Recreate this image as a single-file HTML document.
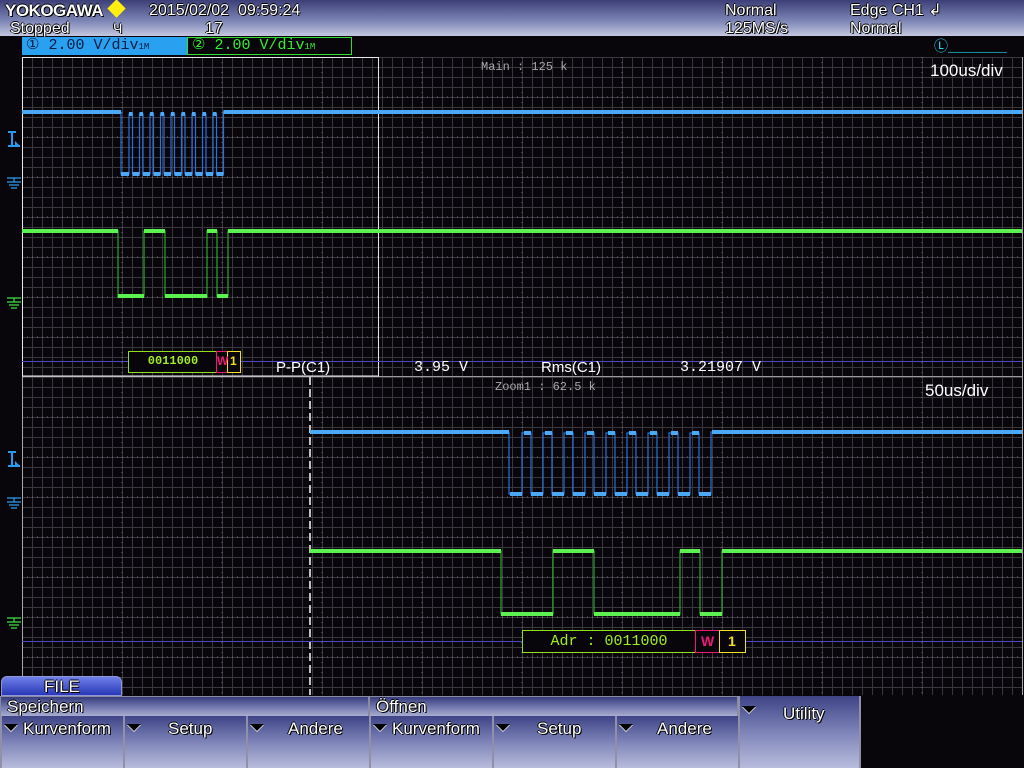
<!DOCTYPE html>
<html><head><meta charset="utf-8"><style>
*{margin:0;padding:0;box-sizing:border-box}
body{width:1024px;height:768px;background:#08060a;position:relative;overflow:hidden;font-family:"Liberation Sans",sans-serif;color:#fff}
.hdr{position:absolute;left:0;top:0;width:1024px;height:36px;background:linear-gradient(#3c3f78,#8088b8 60%,#c4c8e0)}
.t{position:absolute;font-size:16px;line-height:17px;white-space:nowrap;text-shadow:1px 1px 0 #000,-1px 0 0 #000,0 -1px 0 #000}
.m{position:absolute;font-size:15px;white-space:nowrap}
.bar{position:absolute;background:linear-gradient(#363c7c,#7a80b4 60%,#a8acd0);border:1px solid #8a8aa0}
.btn{position:absolute;top:716px;height:52px;width:123px;background:linear-gradient(#3e4486,#7e84b8 50%,#b8bcdc);border-left:2px solid #9090a8}
.tri{position:absolute;width:0;height:0;border-left:7px solid transparent;border-right:7px solid transparent;border-top:7px solid #000;filter:drop-shadow(0 1px 0 #fff)}
</style></head><body>
<div class="hdr"></div>
<div class="t" style="left:5px;top:2px;font-weight:bold;font-size:17px;letter-spacing:-0.5px">YOKOGAWA</div>
<div style="position:absolute;left:110px;top:2px;width:13px;height:13px;background:#ffee10;transform:rotate(45deg)"></div>
<div class="t" style="left:149px;top:2px">2015/02/02&nbsp; 09:59:24</div>
<div class="t" style="left:10px;top:20px">Stopped</div>
<div class="t" style="left:113px;top:20px;font-size:14px">Ч</div>
<div class="t" style="left:205px;top:20px">17</div>
<div class="t" style="left:725px;top:2px">Normal</div>
<div class="t" style="left:725px;top:20px">125MS/s</div>
<div class="t" style="left:850px;top:2px">Edge CH1 ↲</div>
<div class="t" style="left:850px;top:20px">Normal</div>

<div style="position:absolute;left:22px;top:37px;width:165px;height:18px;background:#2aa0f0;color:#0a1a40;font-size:15px;line-height:18px;padding-left:4px;font-family:'Liberation Mono',monospace">①&nbsp;2.00 V/div<span style="font-size:9px">1M</span></div>
<div style="position:absolute;left:187px;top:37px;width:165px;height:18px;border:1px solid #30e030;color:#30f030;font-size:15px;line-height:16px;padding-left:4px;font-family:'Liberation Mono',monospace">②&nbsp;2.00 V/div<span style="font-size:9px">1M</span></div>
<div class="m" style="left:934px;top:36px;color:#20d8e8;font-family:'Liberation Mono',monospace;font-size:14px">Ⓛ_______</div>

<svg style="position:absolute;left:0;top:0" width="1024" height="768">
<defs>
<pattern id="g" x="22" y="57" width="10" height="10" patternUnits="userSpaceOnUse">
<path d="M0 0.5H10M0.5 0V10" stroke="#3a383f" stroke-width="1" fill="none"/></pattern>
</defs>
<rect x="22" y="57" width="1000" height="638" fill="url(#g)"/>
<g stroke="#707076" stroke-dasharray="1 4">
<path d="M122 57V695M222 57V695M322 57V695M422 57V695M522 57V695M622 57V695M722 57V695M822 57V695M922 57V695"/>
<path d="M22 97H1022M22 137H1022M22 177H1022M22 217H1022M22 257H1022M22 297H1022M22 337H1022M22 417H1022M22 457H1022M22 497H1022M22 537H1022M22 577H1022M22 617H1022M22 657H1022"/>
</g>
<path d="M22.5 57V695M1022.5 57V695" stroke="#a8a8a8"/>
<path d="M22 376.5H1022" stroke="#9a9a9a"/>
<rect x="22.5" y="57.5" width="356" height="318.5" fill="none" stroke="#e8e8e8"/>
<path d="M310 377V695" stroke="#c0c0c0" stroke-width="2" stroke-dasharray="8 4"/>
<path d="M22 361.5H1022M22 641.5H1022" stroke="#4a48c8"/>

<path d="M22 112H121V174H129V114H132.5V174H139.5V114H143V174H150V114H153.5V174H160.5V114H164V174H171V114H174.5V174H181.5V114H185V174H192V114H195.5V174H202.5V114H206V174H213V114H216.5V174H223.5V112H1022" stroke="#2a70d8" stroke-width="1.2" fill="none"/>
<path d="M22 112H121M121 174H129M129 114H132.5M132.5 174H139.5M139.5 114H143M143 174H150M150 114H153.5M153.5 174H160.5M160.5 114H164M164 174H171M171 114H174.5M174.5 174H181.5M181.5 114H185M185 174H192M192 114H195.5M195.5 174H202.5M202.5 114H206M206 174H213M213 114H216.5M216.5 174H223.5M223.5 112H1022" stroke="#4aa8f4" stroke-width="4" fill="none"/>
<path d="M22 231H118V296H144V231H165V296H207V231H217V296H228V231H1022" stroke="#28a828" stroke-width="1.2" fill="none"/>
<path d="M22 231H118M118 296H144M144 231H165M165 296H207M207 231H217M217 296H228M228 231H1022" stroke="#5cf050" stroke-width="4" fill="none"/>
<path d="M310 432H509V494H522V433H531V494H543V433H552V494H564V433H573V494H585V433H594V494H606V433H615V494H627V433H636V494H648V433H657V494H669V433H678V494H690V433H699V494H711V432H1022" stroke="#2a70d8" stroke-width="1.2" fill="none"/>
<path d="M310 432H509M510 494H522M524 433H531M531 494H543M545 433H552M552 494H564M566 433H573M573 494H585M587 433H594M594 494H606M608 433H615M615 494H627M629 433H636M636 494H648M650 433H657M657 494H669M671 433H678M678 494H690M692 433H699M699 494H711M712 432H1022" stroke="#4aa8f4" stroke-width="4" fill="none"/>
<path d="M310 551H501V614H553V551H594V614H680V551H700V614H722V551H1022" stroke="#28a828" stroke-width="1.2" fill="none"/>
<path d="M310 551H501M501 614H553M553 551H594M594 614H680M680 551H700M700 614H722M722 551H1022" stroke="#5cf050" stroke-width="4" fill="none"/>

<rect x="128.5" y="351.5" width="88" height="21" fill="#08060a" stroke="#90e020"/>
<rect x="216.5" y="351.5" width="11" height="21" fill="#08060a" stroke="#f01878"/>
<rect x="227.5" y="351.5" width="13" height="21" fill="#08060a" stroke="#f0e020"/>
<rect x="522.5" y="630.5" width="173" height="22" fill="#08060a" stroke="#90e020"/>
<rect x="695.5" y="630.5" width="24" height="22" fill="#08060a" stroke="#f01878"/>
<rect x="719.5" y="630.5" width="26" height="22" fill="#08060a" stroke="#f0e020"/>

<g stroke="#2a9cf0" stroke-width="2" fill="#2a9cf0">
<path d="M8 132H16M12 132V146M8 146H20" fill="none"/>
<path d="M15 141L20 146H15Z" stroke="none"/>
<path d="M7 178H21M14 178V182M7 182H21M9 185H19M11 188H17" stroke-width="1.2" fill="none"/>
<path d="M8 452H16M12 452V466M8 466H20" fill="none"/>
<path d="M15 461L20 466H15Z" stroke="none"/>
<path d="M7 498H21M14 498V502M7 502H21M9 505H19M11 508H17" stroke-width="1.2" fill="none"/>
</g>
<g stroke="#40e040" stroke-width="1.2" fill="none">
<path d="M7 298H21M14 298V302M7 302H21M9 305H19M11 308H17"/>
<path d="M7 618H21M14 618V622M7 622H21M9 625H19M11 628H17"/>
</g>
</svg>

<div class="m" style="left:130px;top:352px;width:86px;text-align:center;color:#a0f020;font-size:12px;line-height:19px;font-family:'Liberation Mono',monospace;font-weight:bold">0011000</div>
<div class="m" style="left:217px;top:352px;color:#f01878;font-size:12px;line-height:19px;font-weight:bold">W</div>
<div class="m" style="left:230px;top:352px;color:#f0e020;font-size:12px;line-height:19px;font-weight:bold">1</div>
<div class="m" style="left:523px;top:631px;width:172px;text-align:center;color:#a0f020;font-size:15px;line-height:21px;font-family:'Liberation Mono',monospace">Adr : 0011000</div>
<div class="m" style="left:701px;top:631px;color:#f01878;font-size:14px;line-height:21px;font-weight:bold">W</div>
<div class="m" style="left:728px;top:631px;color:#f0e020;font-size:14px;line-height:21px;font-weight:bold">1</div>

<div class="m" style="left:276px;top:359px">P-P(C1)</div>
<div class="m" style="left:414px;top:359px;font-family:'Liberation Mono',monospace">3.95 V</div>
<div class="m" style="left:541px;top:359px">Rms(C1)</div>
<div class="m" style="left:680px;top:359px;font-family:'Liberation Mono',monospace">3.21907 V</div>
<div class="m" style="left:481px;top:60px;color:#a8a8a8;font-size:12px;font-family:'Liberation Mono',monospace">Main : 125 k</div>
<div class="m" style="left:495px;top:380px;color:#a8a8a8;font-size:12px;font-family:'Liberation Mono',monospace">Zoom1 : 62.5 k</div>
<div class="m" style="left:930px;top:61px;font-size:17px">100us/div</div>
<div class="m" style="left:925px;top:381px;font-size:17px">50us/div</div>

<div style="position:absolute;left:1px;top:676px;width:121px;height:20px;border-radius:6px 6px 0 0;background:linear-gradient(#7080e8,#2838b8);border:1px solid #9098d8"></div>
<div class="t" style="left:44px;top:678px;font-size:17px">FILE</div>
<div class="bar" style="left:0;top:696px;width:369px;height:21px"></div>
<div class="bar" style="left:369px;top:696px;width:369px;height:21px"></div>
<div class="t" style="left:7px;top:698px;font-size:17px">Speichern</div>
<div class="t" style="left:376px;top:698px;font-size:17px">Öffnen</div>
<div class="btn" style="left:0"></div><div class="btn" style="left:123px"></div><div class="btn" style="left:246px"></div>
<div class="btn" style="left:369px"></div><div class="btn" style="left:492px"></div><div class="btn" style="left:615px"></div>
<div class="btn" style="left:738px;top:696px;height:72px;width:123px;border-right:2px solid #9090a8"></div>
<div class="tri" style="left:4px;top:724px"></div><div class="t" style="left:23px;top:720px;font-size:17px">Kurvenform</div>
<div class="tri" style="left:127px;top:724px"></div><div class="t" style="left:168px;top:720px;font-size:17px">Setup</div>
<div class="tri" style="left:250px;top:724px"></div><div class="t" style="left:288px;top:720px;font-size:17px">Andere</div>
<div class="tri" style="left:373px;top:724px"></div><div class="t" style="left:392px;top:720px;font-size:17px">Kurvenform</div>
<div class="tri" style="left:496px;top:724px"></div><div class="t" style="left:537px;top:720px;font-size:17px">Setup</div>
<div class="tri" style="left:619px;top:724px"></div><div class="t" style="left:657px;top:720px;font-size:17px">Andere</div>
<div class="tri" style="left:742px;top:706px"></div><div class="t" style="left:783px;top:705px;font-size:17px">Utility</div>
</body></html>
